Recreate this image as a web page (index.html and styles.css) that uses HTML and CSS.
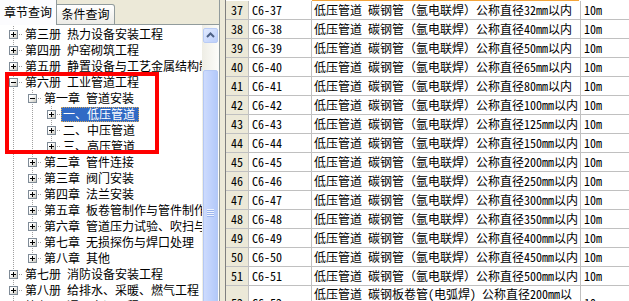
FILE: index.html
```html
<!DOCTYPE html>
<html lang="zh-CN">
<head>
<meta charset="utf-8">
<title>章节查询</title>
<link rel="stylesheet" href="styles.css">
</head>
<body>
<div class="app">
  <div class="left">
    <div class="tabs">
      <div class="tab tab-active">章节查询</div>
      <div class="tab tab-idle">条件查询</div>
      <div class="tab-fill"></div>
    </div>
    <div class="panel">
      <div class="tree">
        <div class="node"><span class="c mid"><i class="bx p"></i><b class="h"></b></span><span class="lb">第三册 热力设备安装工程</span></div>
        <div class="node"><span class="c mid"><i class="bx p"></i><b class="h"></b></span><span class="lb">第四册 炉窑砌筑工程</span></div>
        <div class="node"><span class="c mid"><i class="bx p"></i><b class="h"></b></span><span class="lb">第五册 静置设备与工艺金属结构制作安装工程</span></div>
        <div class="node"><span class="c mid"><i class="bx m"></i><b class="h"></b></span><span class="lb">第六册 工业管道工程</span></div>
        <div class="node"><span class="g v"></span><span class="c mid"><i class="bx m"></i><b class="h"></b></span><span class="lb">第一章 管道安装</span></div>
        <div class="node"><span class="g v"></span><span class="g v"></span><span class="c mid"><i class="bx p"></i><b class="h"></b></span><span class="lb sel">一、低压管道</span></div>
        <div class="node"><span class="g v"></span><span class="g v"></span><span class="c mid"><i class="bx p"></i><b class="h"></b></span><span class="lb">二、中压管道</span></div>
        <div class="node"><span class="g v"></span><span class="g v"></span><span class="c last"><i class="bx p"></i><b class="h"></b></span><span class="lb">三、高压管道</span></div>
        <div class="node"><span class="g v"></span><span class="c mid"><i class="bx p"></i><b class="h"></b></span><span class="lb">第二章 管件连接</span></div>
        <div class="node"><span class="g v"></span><span class="c mid"><i class="bx p"></i><b class="h"></b></span><span class="lb">第三章 阀门安装</span></div>
        <div class="node"><span class="g v"></span><span class="c mid"><i class="bx p"></i><b class="h"></b></span><span class="lb">第四章 法兰安装</span></div>
        <div class="node"><span class="g v"></span><span class="c mid"><i class="bx p"></i><b class="h"></b></span><span class="lb">第五章 板卷管制作与管件制作</span></div>
        <div class="node"><span class="g v"></span><span class="c mid"><i class="bx p"></i><b class="h"></b></span><span class="lb">第六章 管道压力试验、吹扫与清洗</span></div>
        <div class="node"><span class="g v"></span><span class="c mid"><i class="bx p"></i><b class="h"></b></span><span class="lb">第七章 无损探伤与焊口处理</span></div>
        <div class="node"><span class="g v"></span><span class="c last"><i class="bx p"></i><b class="h"></b></span><span class="lb">第八章 其他</span></div>
        <div class="node"><span class="c mid"><i class="bx p"></i><b class="h"></b></span><span class="lb">第七册 消防设备安装工程</span></div>
        <div class="node"><span class="c mid"><i class="bx p"></i><b class="h"></b></span><span class="lb">第八册 给排水、采暖、燃气工程</span></div>
        <div class="node"><span class="c mid"><i class="bx p"></i><b class="h"></b></span><span class="lb">第九册 通风空调工程</span></div>
      </div>
      <div class="vscroll">
        <div class="sbtn"><svg width="13" height="13" viewBox="0 0 13 13"><polyline points="3,8 6.5,4.5 10,8" fill="none" stroke="#4d6185" stroke-width="2"/></svg></div>
        <div class="thumb"><span class="grip"></span></div>
      </div>
      <div class="mark"></div>
    </div>
  </div>
  <div class="split"></div>
  <div class="grid">
    <div class="ghead"><span></span><span></span><span class="hot"></span><span></span></div>
    <div class="grow"><span class="rn">37</span><span class="cd">C6-37</span><span class="ds">低压管道 碳钢管（氩电联焊）公称直径32mm以内</span><span class="un">10m</span></div>
    <div class="grow"><span class="rn">38</span><span class="cd">C6-38</span><span class="ds">低压管道 碳钢管（氩电联焊）公称直径40mm以内</span><span class="un">10m</span></div>
    <div class="grow"><span class="rn">39</span><span class="cd">C6-39</span><span class="ds">低压管道 碳钢管（氩电联焊）公称直径50mm以内</span><span class="un">10m</span></div>
    <div class="grow"><span class="rn">40</span><span class="cd">C6-40</span><span class="ds">低压管道 碳钢管（氩电联焊）公称直径65mm以内</span><span class="un">10m</span></div>
    <div class="grow"><span class="rn">41</span><span class="cd">C6-41</span><span class="ds">低压管道 碳钢管（氩电联焊）公称直径80mm以内</span><span class="un">10m</span></div>
    <div class="grow"><span class="rn">42</span><span class="cd">C6-42</span><span class="ds">低压管道 碳钢管（氩电联焊）公称直径100mm以内</span><span class="un">10m</span></div>
    <div class="grow"><span class="rn">43</span><span class="cd">C6-43</span><span class="ds">低压管道 碳钢管（氩电联焊）公称直径125mm以内</span><span class="un">10m</span></div>
    <div class="grow"><span class="rn">44</span><span class="cd">C6-44</span><span class="ds">低压管道 碳钢管（氩电联焊）公称直径150mm以内</span><span class="un">10m</span></div>
    <div class="grow"><span class="rn">45</span><span class="cd">C6-45</span><span class="ds">低压管道 碳钢管（氩电联焊）公称直径200mm以内</span><span class="un">10m</span></div>
    <div class="grow"><span class="rn">46</span><span class="cd">C6-46</span><span class="ds">低压管道 碳钢管（氩电联焊）公称直径250mm以内</span><span class="un">10m</span></div>
    <div class="grow"><span class="rn">47</span><span class="cd">C6-47</span><span class="ds">低压管道 碳钢管（氩电联焊）公称直径300mm以内</span><span class="un">10m</span></div>
    <div class="grow"><span class="rn">48</span><span class="cd">C6-48</span><span class="ds">低压管道 碳钢管（氩电联焊）公称直径350mm以内</span><span class="un">10m</span></div>
    <div class="grow"><span class="rn">49</span><span class="cd">C6-49</span><span class="ds">低压管道 碳钢管（氩电联焊）公称直径400mm以内</span><span class="un">10m</span></div>
    <div class="grow"><span class="rn">50</span><span class="cd">C6-50</span><span class="ds">低压管道 碳钢管（氩电联焊）公称直径450mm以内</span><span class="un">10m</span></div>
    <div class="grow"><span class="rn">51</span><span class="cd">C6-51</span><span class="ds">低压管道 碳钢管（氩电联焊）公称直径500mm以内</span><span class="un">10m</span></div>
    <div class="grow tall"><span class="rn">52</span><span class="cd">C6-52</span><span class="ds wrap">低压管道 碳钢板卷管(电弧焊) 公称直径200mm以<br>内</span><span class="un">10m</span></div>
  </div>
</div>
</body>
</html>
```

FILE: styles.css
```css
* { box-sizing: border-box; }
html, body { margin: 0; padding: 0; }
body {
  width: 629px;
  height: 301px;
  overflow: hidden;
  background: #ece9d8;
  color: #000;
  font-family: "Noto Sans Mono CJK SC", "Noto Sans CJK SC", sans-serif;
  font-size: 12px;
}
.app { display: flex; height: 301px; }

/* left panel */
.left {
  width: 220px;
  flex: none;
  display: flex;
  flex-direction: column;
  border-right: 1px solid #919b9c;
}
.tabs { display: flex; align-items: flex-end; height: 25px; flex: none; }
.tab { text-align: center; white-space: nowrap; flex: none; }
.tab-active {
  width: 57px;
  height: 25px;
  line-height: 24px;
  background: #fcfcfe;
  border-right: 1px solid #919b9c;
}
.tab-idle {
  width: 58px;
  height: 21px;
  line-height: 18px;
  border: 1px solid #919b9c;
  border-left: none;
  border-radius: 0 3px 0 0;
  background: linear-gradient(#ffffff, #ecebe6);
}
.tab-fill { flex: 1; height: 25px; border-bottom: 1px solid #919b9c; }

.panel {
  flex: 1;
  min-height: 0;
  display: flex;
  background: #fff;
  position: relative;
}
.tree {
  flex: 1;
  min-width: 0;
  overflow: hidden;
  padding: 1px 0 0 4px;
  white-space: nowrap;
}
.node { display: flex; height: 16px; align-items: center; }
.g, .c { width: 19px; height: 16px; flex: none; }
.g.v, .c.mid {
  background: linear-gradient(#a0a0a0 50%, transparent 50%) 9px 0 / 1px 2px repeat-y;
}
.c.last {
  background:
    linear-gradient(#fff, #fff) 9px 8px / 1px 8px no-repeat,
    linear-gradient(#a0a0a0 50%, transparent 50%) 9px 0 / 1px 2px repeat-y;
}
.c { display: flex; align-items: center; padding-left: 5px; }
.bx {
  width: 9px;
  height: 9px;
  flex: none;
  border: 1px solid #7f8b97;
  background-color: #f4f4f0;
}
.bx.p {
  background:
    linear-gradient(#000, #000) 1px 3px / 5px 1px no-repeat,
    linear-gradient(#000, #000) 3px 1px / 1px 5px no-repeat,
    linear-gradient(135deg, #ffffff 30%, #c9c8bf);
}
.bx.m {
  background:
    linear-gradient(#000, #000) 1px 3px / 5px 1px no-repeat,
    linear-gradient(135deg, #ffffff 30%, #c9c8bf);
}
.h {
  flex: 1;
  height: 1px;
  background: linear-gradient(90deg, #a0a0a0 50%, transparent 50%) 1px 0 / 2px 1px repeat-x;
}
.lb {
  height: 15px;
  line-height: 11px;
  padding: 0 3px 0 1px;
  border: 1px solid transparent;
}
.lb.sel {
  background: #316ac5;
  color: #fff;
  border: 1px dotted #d6a85a;
}

/* scrollbar */
.vscroll {
  width: 17px;
  flex: none;
  overflow: hidden;
  padding-top: 3px;
  display: flex;
  flex-direction: column;
  align-items: center;
  background: linear-gradient(90deg, #eeede5, #fdfdfa);
}
.sbtn {
  width: 15px;
  height: 15px;
  flex: none;
  border: 1px solid #b9ccf5;
  border-radius: 2px;
  background: linear-gradient(135deg, #e1eafe, #bccffb);
  display: flex;
  align-items: center;
  justify-content: center;
}
.thumb {
  width: 15px;
  height: 286px;
  flex: none;
  margin-top: 27px;
  border: 1px solid #b4c8f4;
  border-radius: 2px;
  background: linear-gradient(90deg, #cddbfd, #c0d2fc 50%, #b3c9f9);
  display: flex;
  align-items: center;
  justify-content: center;
}
.grip {
  width: 7px;
  height: 8px;
  background: repeating-linear-gradient(#eef3fe 0 1px, #9db6ee 1px 2px);
}

/* annotation box */
.mark {
  position: absolute;
  left: 5px;
  top: 47px;
  width: 154px;
  height: 82px;
  border: 4px solid #ff0000;
  pointer-events: none;
}

.split { width: 5px; flex: none; }

/* grid */
.grid {
  flex: 1;
  min-width: 0;
  display: flex;
  flex-direction: column;
  overflow: hidden;
  background: #fff;
  border-left: 1px solid #7f7f7f;
}
.ghead, .grow {
  display: grid;
  grid-template-columns: 23px 63px 269px 1fr;
  flex: none;
}
.ghead { height: 1px; }
.ghead .hot { background: #f4a53b; margin-right: 2px; }
.grow { height: 19px; }
.grow > span {
  display: flex;
  align-items: center;
  line-height: 18px;
  white-space: nowrap;
  overflow: hidden;
  border-right: 1px solid #c0c0c0;
  border-bottom: 1px solid #c0c0c0;
}
.rn { background: #ece9d8; justify-content: center; }
.cd { padding-left: 3px; }
.ds { padding-left: 2px; }
.un { padding-left: 3px; border-right: none !important; }
.grow.tall { height: 34px; }
.grow > .wrap {
  align-items: flex-start;
  white-space: normal;
  line-height: 14px;
  padding-top: 1px;
}
```
